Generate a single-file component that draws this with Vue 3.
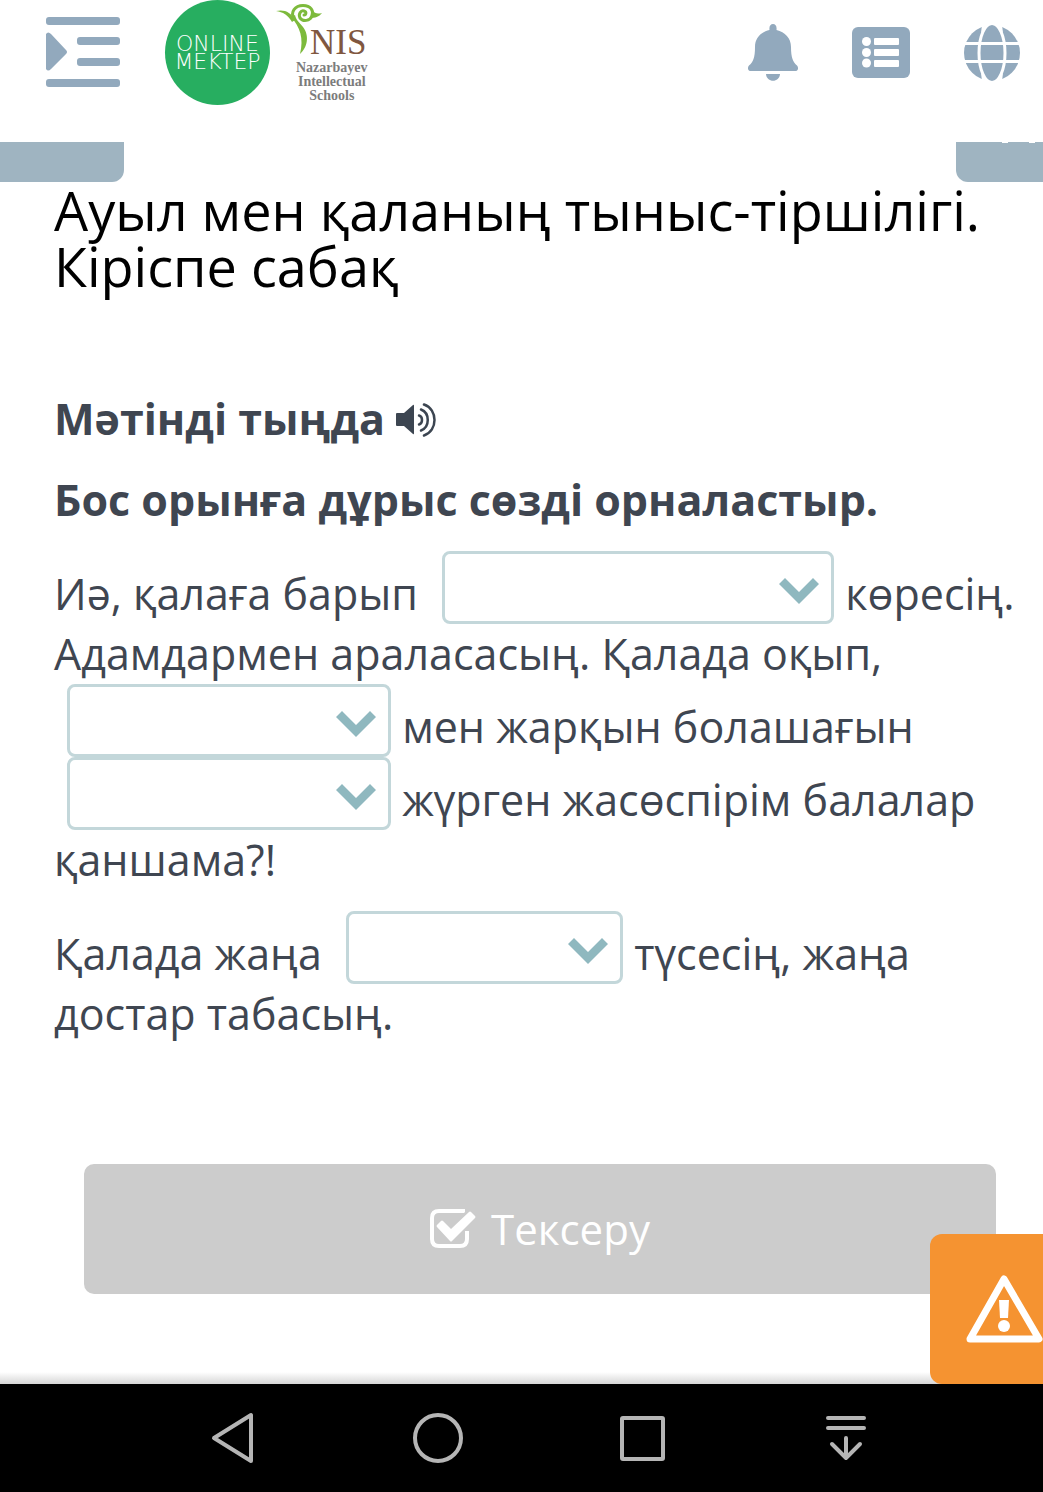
<script setup>
import { ref } from 'vue'

const answers = ref({ see: '', friend: '', future: '', place: '' })

const paragraphs = [
  [
    { text: 'Иә, қалаға барып ' },
    { id: 'see', size: 'wide', label: 'Бірінші бос орын' },
    { text: ' көресің. Адамдармен араласасың. Қалада оқып, ' },
    { id: 'friend', size: 'medium', label: 'Екінші бос орын' },
    { text: ' мен жарқын болашағын ' },
    { id: 'future', size: 'medium', label: 'Үшінші бос орын' },
    { text: ' жүрген жасөспірім балалар қаншама?!' },
  ],
  [
    { text: 'Қалада жаңа ' },
    { id: 'place', size: 'small', label: 'Төртінші бос орын' },
    { text: ' түсесің, жаңа достар табасың.' },
  ],
]
</script>

<template>
  <div class="page">
    <header class="header">
      <button class="icon-button menu" type="button" aria-label="Мәзір">
        <svg width="74" height="70" viewBox="0 0 74 70" fill="#92a9bd">
          <rect x="0" y="0" width="74" height="8" rx="3" />
          <rect x="31" y="20" width="43" height="8" rx="3" />
          <rect x="31" y="41" width="43" height="8" rx="3" />
          <rect x="0" y="62" width="74" height="8" rx="3" />
          <path d="M0 17Q2 14 5 17L20 33Q22 35 20 37L5 52Q2 55 0 52Z" />
        </svg>
      </button>

      <a class="mektep" href="#"><span>ONLINE</span><span>MEKTEP</span></a>

      <a class="nis" href="#">
        <span class="nis-top">
          <svg width="48" height="56" viewBox="0 0 48 56">
            <g fill="#7dba3c">
              <path d="M0 11C8 9 15 12 19 20L16 22C12 15 7 12 0 11Z" />
              <path d="M36 10C39 14 42 14 46 13C43 17 39 18 34 18Z" />
              <path d="M15 17C24 27 28 38 24 54C31 48 34 36 27 27C23 22 20 20 19 15Z" />
            </g>
            <path d="M18 19C14 12 19 5.500 27 5.500C35 5.500 38 11 36 16C34 21 27 22 24 18C22 14 25 10 28 11C31 12 30 15 28 15" fill="none" stroke="#7dba3c" stroke-width="3" stroke-linecap="round" />
          </svg>
          <b class="nis-name">NIS</b>
        </span>
        <span class="nis-caption">Nazarbayev<br />Intellectual<br />Schools</span>
      </a>

      <nav class="tools">
        <button class="icon-button" type="button" aria-label="Хабарламалар">
          <svg width="50" height="58" viewBox="0 0 50 58" fill="#92a9bd">
            <path d="M25 0C27.500 0 29 2 28.500 6C37 8 43 14 43 23C43 34 45 38 49 41.500C51 44 50 47 47 47H3C0 47-1 44 1 41.500C5 38 7 34 7 23C7 14 13 8 21.500 6C21 2 22.500 0 25 0Z" />
            <path d="M18 50H32C31.500 59 18.500 59 18 50Z" />
          </svg>
        </button>
        <button class="icon-button" type="button" aria-label="Тізім">
          <svg width="58" height="51" viewBox="0 0 58 51">
            <rect width="58" height="51" rx="6" fill="#92a9bd" />
            <g fill="#fff">
              <circle cx="14.500" cy="14.500" r="4.500" />
              <circle cx="14.500" cy="25.500" r="4.500" />
              <circle cx="14.500" cy="36" r="4.500" />
              <rect x="22" y="11" width="25" height="7" rx="1" />
              <rect x="22" y="22" width="25" height="7" rx="1" />
              <rect x="22" y="33" width="25" height="7" rx="1" />
            </g>
          </svg>
        </button>
        <button class="icon-button" type="button" aria-label="Тіл">
          <svg width="56" height="56" viewBox="0 0 56 56">
            <circle cx="28" cy="28" r="28" fill="#92a9bd" />
            <g fill="none" stroke="#fff" stroke-width="3">
              <ellipse cx="28" cy="28" rx="13" ry="29.500" />
              <path d="M0 18.500H56M0 36.500H56" />
            </g>
            <path d="M18 0H22L17 8ZM38 0H34L39 8ZM18 56H22L17 48ZM38 56H34L39 48Z" fill="#fff" />
          </svg>
        </button>
      </nav>
    </header>

    <div class="tabs">
      <span class="tab tab-left"></span>
      <span class="tab tab-right">
        <svg width="40" height="1" viewBox="0 0 40 1" fill="#fff">
          <rect x="4" width="6" height="1" />
          <rect x="31" width="6" height="1" />
        </svg>
      </span>
    </div>

    <main class="lesson">
      <h1>Ауыл мен қаланың тыныс-тіршілігі. Кіріспе сабақ</h1>

      <h2>
        Мәтінді тыңда
        <button class="icon-button sound" type="button" aria-label="Тыңдау">
          <svg width="41" height="35" viewBox="0 0 41 35">
            <path d="M0 11Q0 10 1 10H8L17 2Q18 1 18 3V30Q18 32 17 31L8 23H1Q0 23 0 22Z" fill="#3c4551" />
            <g fill="none" stroke="#3c4551" stroke-width="2.500" stroke-linecap="round">
              <path d="M23 12.500C27 13.500 27 20.500 23 21.500" />
              <path d="M25 6.500C34 10 34 24 25 27.500" />
              <path d="M28 1.500C42 6 42 28 28 32.500" />
            </g>
          </svg>
        </button>
      </h2>
      <h2>Бос орынға дұрыс сөзді орналастыр.</h2>

      <form @submit.prevent>
        <p v-for="(parts, i) in paragraphs" :key="i">
          <template v-for="(part, j) in parts" :key="j">
            <span v-if="part.id" class="gap" :class="part.size">
              <select v-model="answers[part.id]" :aria-label="part.label">
                <option value=""></option>
              </select>
              <svg class="chevron" width="40" height="26" viewBox="0 0 40 26" aria-hidden="true">
                <path d="M0 6L6 0L20 14L34 0L40 6L20 26Z" fill="#8fb8bf" />
              </svg>
            </span>
            <template v-else>{{ part.text }}</template>
          </template>
        </p>

        <button class="check" type="submit">
          <svg width="46" height="40" viewBox="0 0 46 40">
            <path d="M35 2H9Q2 2 2 9V30Q2 37 9 37H30Q37 37 37 30V22" fill="none" stroke="#fff" stroke-width="4" />
            <path d="M33 5L38 0H46V16H33Z" fill="#ccc" />
            <path d="M7 18Q6 17 7 16L11 12Q12 11 13 12L21 20L39 3Q40 2 41 3L45 7Q46 8 45 9L22 32Q21 33 20 32Z" fill="#fff" />
          </svg>
          Тексеру
        </button>
      </form>

      <button class="report" type="button" aria-label="Қате туралы хабарлау">
        <svg width="77" height="68" viewBox="0 0 77 68">
          <path d="M38 4L73 64H4Z" fill="none" stroke="#fff" stroke-width="7" stroke-linejoin="round" />
          <path d="M33 25H43L42 43H34Z" fill="#fff" />
          <circle cx="38" cy="51" r="6" fill="#fff" />
        </svg>
      </button>
    </main>

    <nav class="system">
      <button class="icon-button" type="button" aria-label="Артқа">
        <svg width="52" height="52" viewBox="0 0 52 52" class="line">
          <path d="M43 3V49L6 26Z" />
        </svg>
      </button>
      <button class="icon-button" type="button" aria-label="Басты экран">
        <svg width="52" height="52" viewBox="0 0 52 52" class="line">
          <circle cx="26" cy="26" r="23" />
        </svg>
      </button>
      <button class="icon-button" type="button" aria-label="Соңғы қолданбалар">
        <svg width="52" height="52" viewBox="0 0 52 52" class="line">
          <rect x="6" y="6" width="41" height="41" rx="1" />
        </svg>
      </button>
      <button class="icon-button" type="button" aria-label="Панельді жасыру">
        <svg width="52" height="52" viewBox="0 0 52 52" class="line">
          <path d="M8 6H44M8 16H44M26 26V46M12 32L26 46L40 32" />
        </svg>
      </button>
    </nav>
  </div>
</template>

<style>
body {
  margin: 0;
  background: #fff;
}
</style>

<style scoped>
.page {
  display: flex;
  flex-direction: column;
  min-height: 100vh;
  font-family: 'Open Sans', 'Noto Sans', sans-serif;
  color: #3f4651;
}

svg {
  display: block;
}

.icon-button {
  padding: 0;
  border: 0;
  background: none;
  cursor: pointer;
}

a {
  text-decoration: none;
}

.header {
  display: flex;
  align-items: flex-start;
  box-sizing: border-box;
  height: 142px;
  padding: 0 23px 0 46px;
}

.menu {
  margin: 17px 45px 0 0;
}

.mektep {
  display: flex;
  flex-direction: column;
  align-items: center;
  justify-content: center;
  flex: none;
  width: 105px;
  height: 105px;
  border-radius: 50%;
  background: #27ae60;
  color: #fff;
  font: 200 22px/18px 'DejaVu Sans', sans-serif;
}

.nis {
  margin-left: 6px;
}

.nis-top {
  display: flex;
  align-items: flex-end;
  height: 61px;
}

.nis-top svg {
  align-self: flex-start;
}

.nis-name {
  margin-left: -14px;
  color: #80573f;
  font: 400 35px/36px 'Liberation Serif', serif;
}

.nis-caption {
  display: block;
  padding-left: 20px;
  color: #7c7c7c;
  font: 700 14px/14px 'Liberation Serif', serif;
  text-align: center;
}

.tools {
  display: flex;
  align-items: center;
  gap: 54px;
  height: 105px;
  margin-left: auto;
}

.tabs {
  display: flex;
  justify-content: space-between;
}

.tab {
  height: 40px;
  background: #9fb4c1;
}

.tab-left {
  width: 124px;
  border-bottom-right-radius: 12px;
}

.tab-right {
  width: 87px;
  border-bottom-left-radius: 12px;
}

.tab-right svg {
  margin-left: 42px;
}

.lesson {
  position: relative;
  flex: 1;
  padding: 0 15px 90px 54px;
  background: linear-gradient(to top, #d6d6d6, #fff 12px);
}

h1 {
  margin: 0 0 95px;
  color: #000;
  font-size: 54px;
  font-weight: 400;
  line-height: 56px;
}

h2,
p {
  margin: 0 0 21px;
  font-size: 43px;
  line-height: 60px;
}

h2 {
  font-weight: 700;
}

.sound {
  vertical-align: -3px;
}

.gap {
  position: relative;
  display: inline-block;
  height: 73px;
  margin-left: 13px;
  vertical-align: bottom;
}

.wide {
  width: 392px;
}

.medium {
  width: 324px;
}

.small {
  width: 277px;
}

select {
  display: block;
  box-sizing: border-box;
  width: 100%;
  height: 100%;
  padding: 0 60px 0 16px;
  border: 3px solid #c3d7da;
  border-radius: 8px;
  background: #fff;
  color: inherit;
  font: inherit;
  appearance: none;
}

.chevron {
  position: absolute;
  top: 27px;
  right: 15px;
  pointer-events: none;
}

.check {
  display: flex;
  align-items: center;
  justify-content: center;
  gap: 15px;
  width: calc(100% - 62px);
  height: 130px;
  margin: 120px 0 0 30px;
  padding: 0;
  border: 0;
  border-radius: 10px;
  background: #ccc;
  color: #fff;
  font: 400 42px/60px 'Open Sans', 'Noto Sans', sans-serif;
}

.report {
  position: absolute;
  right: 0;
  bottom: 0;
  width: 113px;
  height: 150px;
  padding: 0 0 0 36px;
  border: 0;
  border-radius: 12px 0 0 12px;
  background: #f59331;
}

.system {
  display: flex;
  justify-content: space-between;
  align-items: center;
  height: 107px;
  padding: 0 171px 0 208px;
  background: #000;
}

.lesson + .system {
  padding-bottom: 1px;
}

.line {
  fill: none;
  stroke: #b5b5b5;
  stroke-width: 4;
  stroke-linecap: round;
  stroke-linejoin: round;
}
</style>
